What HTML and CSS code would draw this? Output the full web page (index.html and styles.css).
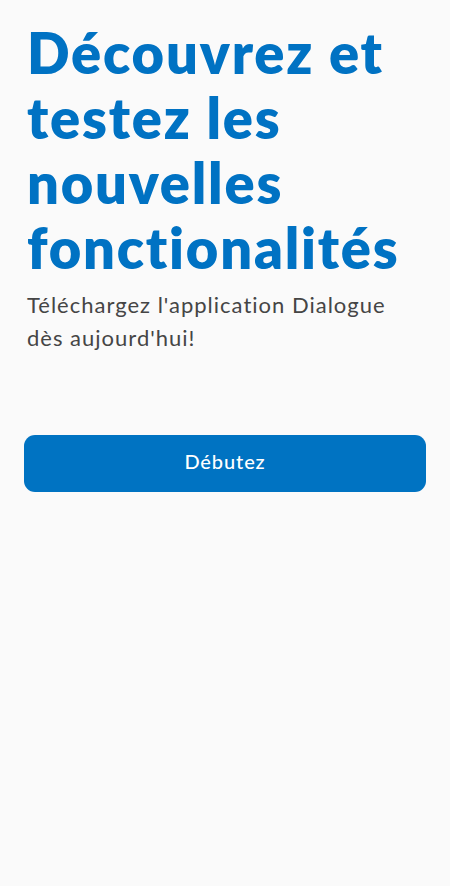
FILE: index.html
```html
<!DOCTYPE html>
<html lang="fr">
<head>
<meta charset="utf-8">
<link rel="stylesheet" href="styles.css">
</head>
<body>
<main class="page">
  <h1 class="title">Découvrez et testez les nouvelles fonctionalités</h1>
  <p class="subtitle">Téléchargez l'application Dialogue dès aujourd'hui!</p>
  <button class="cta" type="button">Débutez</button>
</main>
</body>
</html>
```
FILE: styles.css
```css
html, body {
  margin: 0;
  padding: 0;
  background: #fafafa;
}
body {
  font-family: Lato, "Noto Sans", sans-serif;
}
.page {
  padding: 20px 24px 0 24px;
  display: flex;
  flex-direction: column;
}
.title {
  margin: 0 0 0 3px;
  font-size: 56px;
  line-height: 65px;
  font-weight: 800;
  color: #0072c3;
  letter-spacing: 1.8px;
}
.subtitle {
  margin: 8px 0 0 3px;
  max-width: 380px;
  font-size: 22px;
  line-height: 33px;
  color: #454545;
  letter-spacing: 1px;
}
.cta {
  margin-top: 81px;
  height: 57px;
  padding: 0 0 5px 0;
  border: none;
  border-radius: 11px;
  background: #0073c2;
  color: #fff;
  font-family: Lato, "Noto Sans", sans-serif;
  font-size: 20px;
  font-weight: 500;
  letter-spacing: 0.9px;
}
```
